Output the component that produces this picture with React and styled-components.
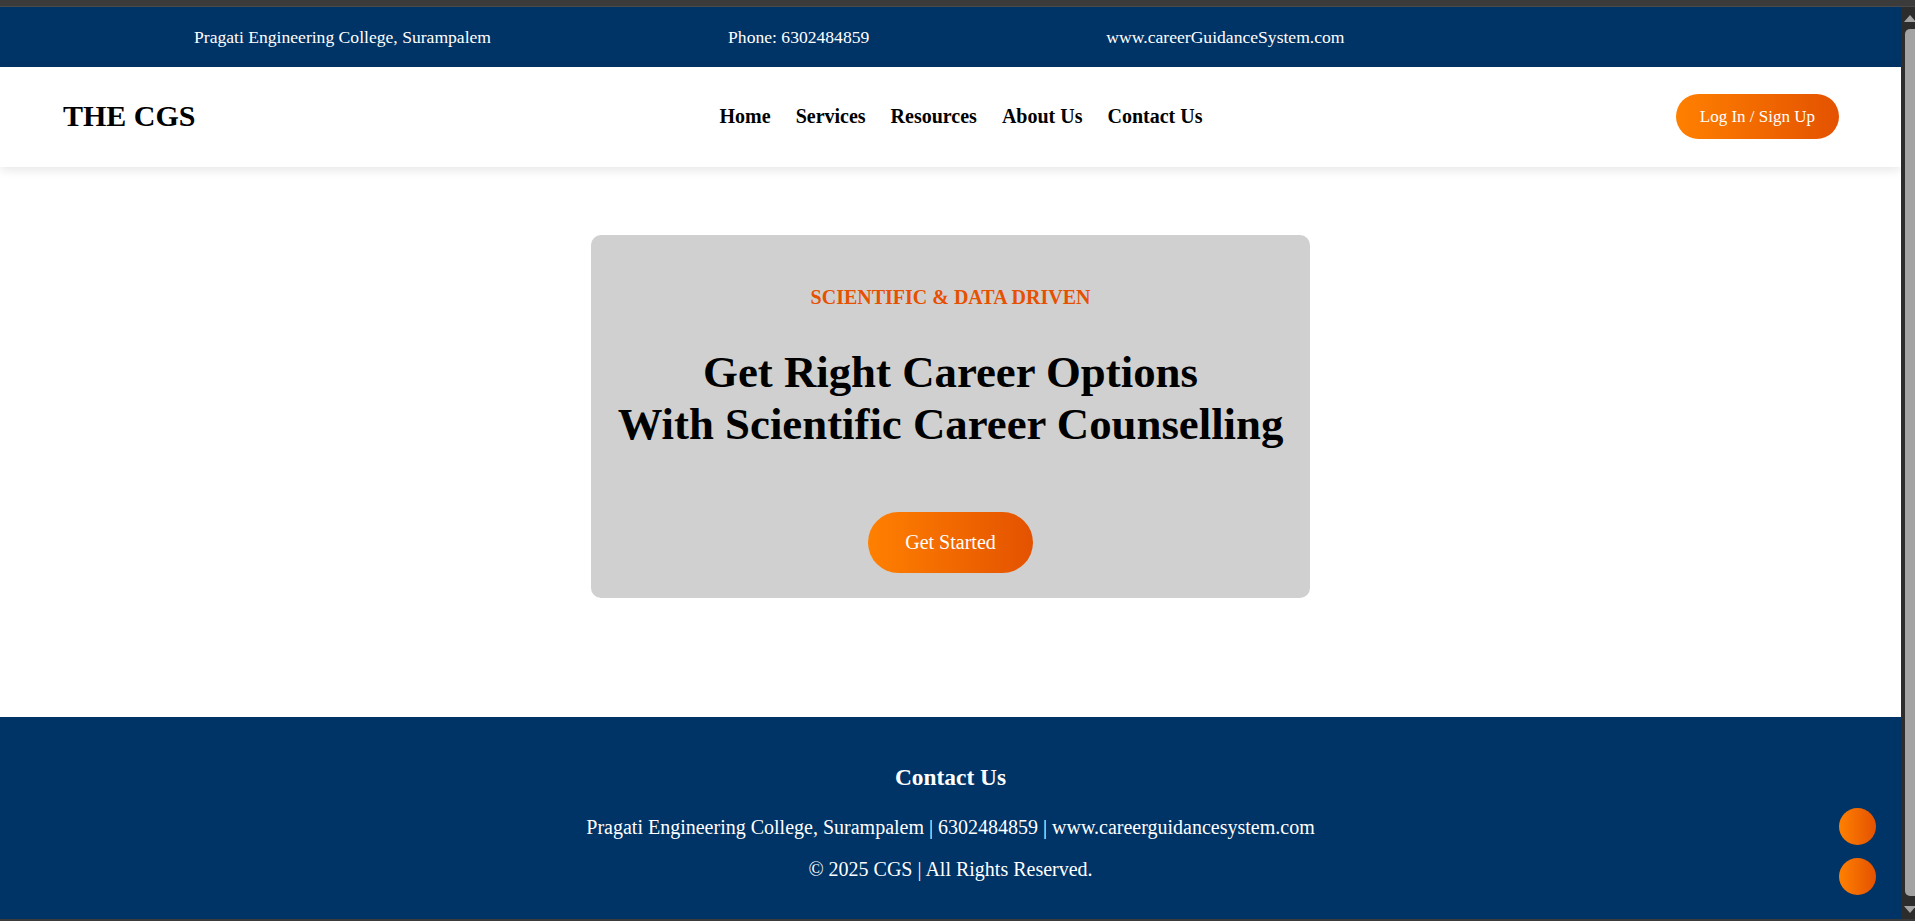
import React from 'react';
import styled, { createGlobalStyle } from 'styled-components';

const GlobalStyle = createGlobalStyle`
  html, body {
    margin: 0;
    padding: 0;
    overflow: hidden;
    background: #3b3b3b;
  }
  * {
    box-sizing: border-box;
  }
`;

const serif = `"Liberation Serif", "Times New Roman", serif`;
const orange = 'linear-gradient(to right, #ff8000, #e45200)';

const Frame = styled.div`
  width: 1915px;
  height: 921px;
  display: flex;
  flex-direction: column;
  background: #3b3b3b;
  overflow: hidden;
  font-family: ${serif};
`;

const ChromeTop = styled.div`
  flex: none;
  height: 7px;
  background: #3b3b3b;
  border-bottom: 1px solid #4a4a4a;
`;

const ChromeBottom = styled.div`
  flex: none;
  height: 2px;
  background: #3b3b3b;
`;

const Window = styled.div`
  flex: 1;
  display: flex;
  min-height: 0;
`;

const Viewport = styled.div`
  position: relative;
  flex: 1;
  overflow: hidden;
  background: #fff;
`;

const Scrollbar = styled.div`
  flex: none;
  width: 14px;
  background: #2c2c2c;
  display: flex;
  flex-direction: column;
  align-items: flex-end;
  padding: 8px 0 6px;
`;

const Arrow = styled.div`
  width: 0;
  height: 0;
  margin-right: -1px;
  border-left: 6px solid transparent;
  border-right: 6px solid transparent;
  ${(p) => (p.down ? 'border-top: 7px solid #a3a3a3;' : 'border-bottom: 7px solid #a3a3a3;')}
`;

const Thumb = styled.div`
  flex: 1;
  width: 10px;
  margin: 7px 0 10px;
  background: #a3a3a3;
  border-radius: 5px 0 0 5px;
`;

const TopBar = styled.div`
  height: 60px;
  background: #003366;
  color: #fff;
  display: flex;
  align-items: center;
  gap: 237px;
  padding-left: 194px;
  font-size: 17.6px;
`;

const Nav = styled.nav`
  position: relative;
  z-index: 1;
  height: 100px;
  background: #fff;
  box-shadow: 0 3px 10px rgba(0, 0, 0, 0.1);
  display: grid;
  grid-template-columns: 1fr auto 1fr;
  align-items: center;
  padding: 0 62px 0 63px;
`;

const Logo = styled.div`
  font-size: 30px;
  font-weight: bold;
  color: #000;
  margin-top: -3px;
`;

const Links = styled.div`
  display: flex;
  gap: 25px;
  padding-left: 20px;
  margin-top: -1px;
`;

const NavLink = styled.a`
  font-size: 20px;
  font-weight: bold;
  color: #000;
  text-decoration: none;
`;

const PillButton = styled.button`
  border: none;
  border-radius: 999px;
  background: ${orange};
  color: #fff;
  font-family: ${serif};
  font-size: ${(p) => p.size}px;
  line-height: ${(p) => p.lh}px;
  padding: ${(p) => p.pad};
  cursor: pointer;
`;

const LoginWrap = styled.div`
  display: flex;
  justify-content: flex-end;
  margin-top: -2px;
`;

const Hero = styled.section`
  height: 550px;
  padding-top: 68px;
  display: flex;
  justify-content: center;
  align-items: flex-start;
`;

const Card = styled.div`
  width: 719px;
  height: 363px;
  background: #d0d0d0;
  border-radius: 10px;
  padding: 51px 20px 24px;
  display: flex;
  flex-direction: column;
  align-items: center;
  text-align: center;
`;

const Eyebrow = styled.p`
  margin: 0 0 38px;
  color: #e65100;
  font-size: 20px;
  font-weight: bold;
  line-height: 23px;
`;

const Heading = styled.h1`
  margin: 0 0 62px;
  font-size: 44.8px;
  font-weight: bold;
  line-height: 51.5px;
  color: #000;
`;

const Footer = styled.footer`
  background: #003366;
  color: #fff;
  text-align: center;
  padding: 47px 20px 48px;
`;

const FooterTitle = styled.h3`
  margin: 0 0 25px;
  font-size: 23.4px;
  line-height: 27px;
  font-weight: bold;
`;

const FooterLine = styled.p`
  margin: 0 0 19px;
  font-size: 20px;
  line-height: 23px;
`;

const FloatStack = styled.div`
  position: absolute;
  right: 25px;
  bottom: 24px;
  display: flex;
  flex-direction: column;
  gap: 13px;
`;

const FloatDot = styled.button`
  width: 37px;
  height: 37px;
  padding: 0;
  border: none;
  border-radius: 50%;
  background: ${orange};
  cursor: pointer;
`;

export default function App() {
  return (
    <Frame>
      <GlobalStyle />
      <ChromeTop />
      <Window>
        <Viewport>
          <TopBar>
            <span>Pragati Engineering College, Surampalem</span>
            <span>Phone: 6302484859</span>
            <span>www.careerGuidanceSystem.com</span>
          </TopBar>
          <Nav>
            <Logo>THE CGS</Logo>
            <Links>
              {['Home', 'Services', 'Resources', 'About Us', 'Contact Us'].map((l) => (
                <NavLink key={l} href="#">{l}</NavLink>
              ))}
            </Links>
            <LoginWrap>
              <PillButton size={17} lh={21} pad="12px 24px">Log In / Sign Up</PillButton>
            </LoginWrap>
          </Nav>
          <Hero>
            <Card>
              <Eyebrow>SCIENTIFIC &amp; DATA DRIVEN</Eyebrow>
              <Heading>
                Get Right Career Options
                <br />
                With Scientific Career Counselling
              </Heading>
              <PillButton size={20} lh={23} pad="19px 37px">Get Started</PillButton>
            </Card>
          </Hero>
          <Footer>
            <FooterTitle>Contact Us</FooterTitle>
            <FooterLine>
              Pragati Engineering College, Surampalem | 6302484859 | www.careerguidancesystem.com
            </FooterLine>
            <FooterLine>© 2025 CGS | All Rights Reserved.</FooterLine>
          </Footer>
          <FloatStack>
            <FloatDot aria-label="chat" />
            <FloatDot aria-label="top" />
          </FloatStack>
        </Viewport>
        <Scrollbar>
          <Arrow />
          <Thumb />
          <Arrow down />
        </Scrollbar>
      </Window>
      <ChromeBottom />
    </Frame>
  );
}
